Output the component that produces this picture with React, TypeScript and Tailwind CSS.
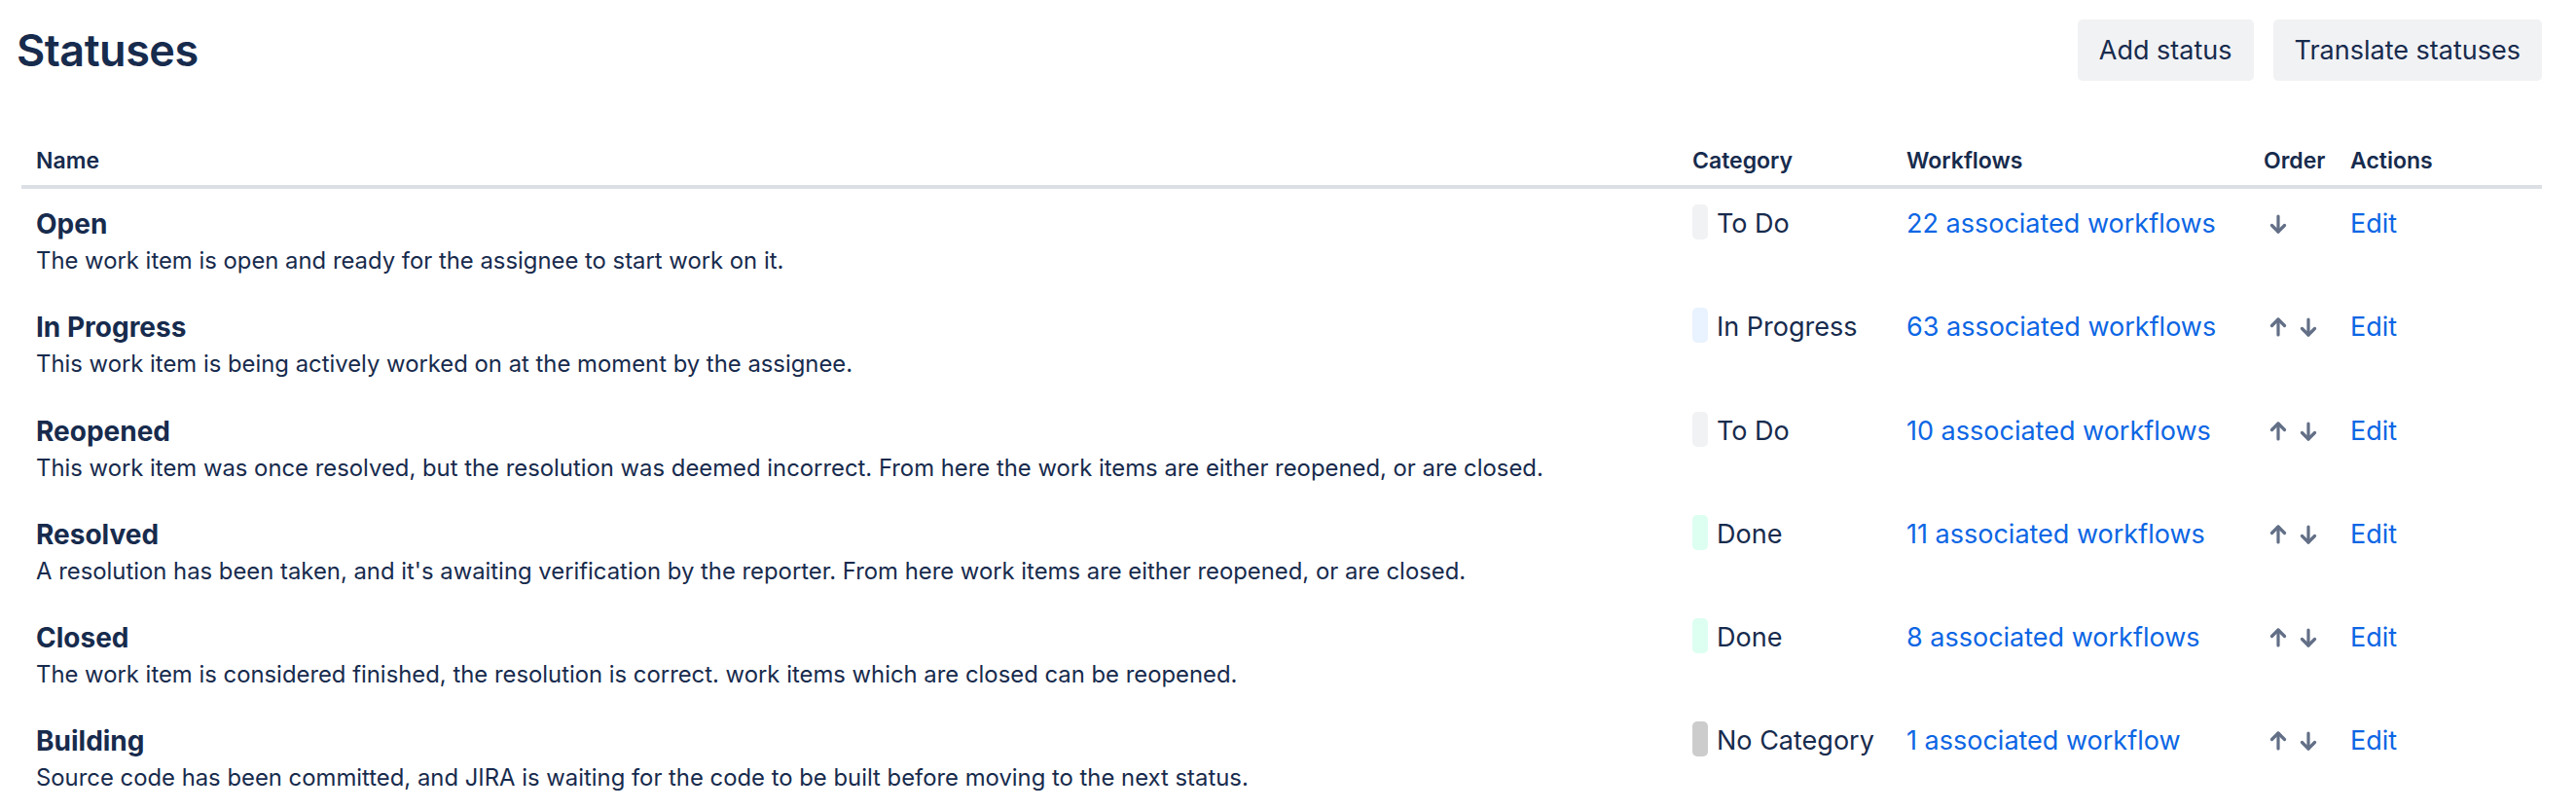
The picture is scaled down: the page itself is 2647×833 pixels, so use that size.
import React from "react";

type Row = {
  name: string;
  desc: string;
  cat: string;
  catColor: string;
  wf: string;
  up: boolean;
  down: boolean;
};

const rows: Row[] = [
  {
    name: "Open",
    desc: "The work item is open and ready for the assignee to start work on it.",
    cat: "To Do",
    catColor: "bg-[#f1f2f4]",
    wf: "22 associated workflows",
    up: false,
    down: true,
  },
  {
    name: "In Progress",
    desc: "This work item is being actively worked on at the moment by the assignee.",
    cat: "In Progress",
    catColor: "bg-[#e9f2ff]",
    wf: "63 associated workflows",
    up: true,
    down: true,
  },
  {
    name: "Reopened",
    desc: "This work item was once resolved, but the resolution was deemed incorrect. From here the work items are either reopened, or are closed.",
    cat: "To Do",
    catColor: "bg-[#f1f2f4]",
    wf: "10 associated workflows",
    up: true,
    down: true,
  },
  {
    name: "Resolved",
    desc: "A resolution has been taken, and it's awaiting verification by the reporter. From here work items are either reopened, or are closed.",
    cat: "Done",
    catColor: "bg-[#dcfff1]",
    wf: "11 associated workflows",
    up: true,
    down: true,
  },
  {
    name: "Closed",
    desc: "The work item is considered finished, the resolution is correct. work items which are closed can be reopened.",
    cat: "Done",
    catColor: "bg-[#dcfff1]",
    wf: "8 associated workflows",
    up: true,
    down: true,
  },
  {
    name: "Building",
    desc: "Source code has been committed, and JIRA is waiting for the code to be built before moving to the next status.",
    cat: "No Category",
    catColor: "bg-[#cccccc]",
    wf: "1 associated workflow",
    up: true,
    down: true,
  },
];

function ArrowUp() {
  return (
    <svg width="20" height="20" viewBox="0 0 20 20" fill="none" stroke="#626f86" strokeWidth="3.2" strokeLinecap="round" strokeLinejoin="round">
      <path d="M10 18V2" />
      <path d="M3.5 8.5L10 2l6.5 6.5" />
    </svg>
  );
}

function ArrowDown() {
  return (
    <svg width="20" height="20" viewBox="0 0 20 20" fill="none" stroke="#626f86" strokeWidth="3.2" strokeLinecap="round" strokeLinejoin="round">
      <path d="M10 2v16" />
      <path d="M3.5 11.5L10 18l6.5-6.5" />
    </svg>
  );
}

const grid = "grid grid-cols-[1702px_220px_367px_89px_212px]";

export default function App() {
  return (
    <div className="min-h-screen bg-white text-[#172b4d] pl-[17px] pr-[35px] pt-[20px] font-['Inter','Noto_Sans',sans-serif]">
      <div className="flex items-center justify-between h-[63px]">
        <h1 className="text-[45px] font-semibold leading-[56px] tracking-[-0.5px]">Statuses</h1>
        <div className="flex gap-[20px]">
          <button className="h-[63px] px-[22px] rounded-[5px] bg-[#f1f2f4] text-[27px] leading-[34px] text-[#172b4d]">
            Add status
          </button>
          <button className="h-[63px] px-[22px] rounded-[5px] bg-[#f1f2f4] text-[27px] leading-[34px] text-[#172b4d]">
            Translate statuses
          </button>
        </div>
      </div>

      <div className="ml-[5px] mt-[57px]">
        <div className={`${grid} border-b-[4px] border-[#dcdfe4] text-[23px] font-semibold leading-[34px] pb-[8px] pt-[8px]`}>
          <div className="pl-[15px]">Name</div>
          <div className="pl-[15px]">Category</div>
          <div className="pl-[15px]">Workflows</div>
          <div className="pl-[15px]">Order</div>
          <div className="pl-[15px]">Actions</div>
        </div>

        {rows.map((r, i) => (
          <div key={i} className={`${grid} h-[106.3px] pt-[19px]`}>
            <div className="pl-[15px]">
              <div className="text-[28px] font-bold leading-[34px]">{r.name}</div>
              <div className="mt-[4px] text-[23.85px] leading-[34px] whitespace-nowrap">{r.desc}</div>
            </div>
            <div className="pl-[15px] flex items-start">
              <span className={`mt-[-3px] w-[16px] h-[36px] rounded-[5px] ${r.catColor}`} />
              <span className="ml-[9px] text-[27px] leading-[34px] whitespace-nowrap">{r.cat}</span>
            </div>
            <div className="pl-[15px]">
              <a className="text-[27px] leading-[34px] text-[#0c66e4] whitespace-nowrap">{r.wf}</a>
            </div>
            <div className="pl-[20px] flex items-center gap-[11px] h-[34px]">
              {r.up && <ArrowUp />}
              {r.down && <ArrowDown />}
            </div>
            <div className="pl-[15px]">
              <a className="text-[27px] leading-[34px] text-[#0c66e4]">Edit</a>
            </div>
          </div>
        ))}
      </div>
    </div>
  );
}
